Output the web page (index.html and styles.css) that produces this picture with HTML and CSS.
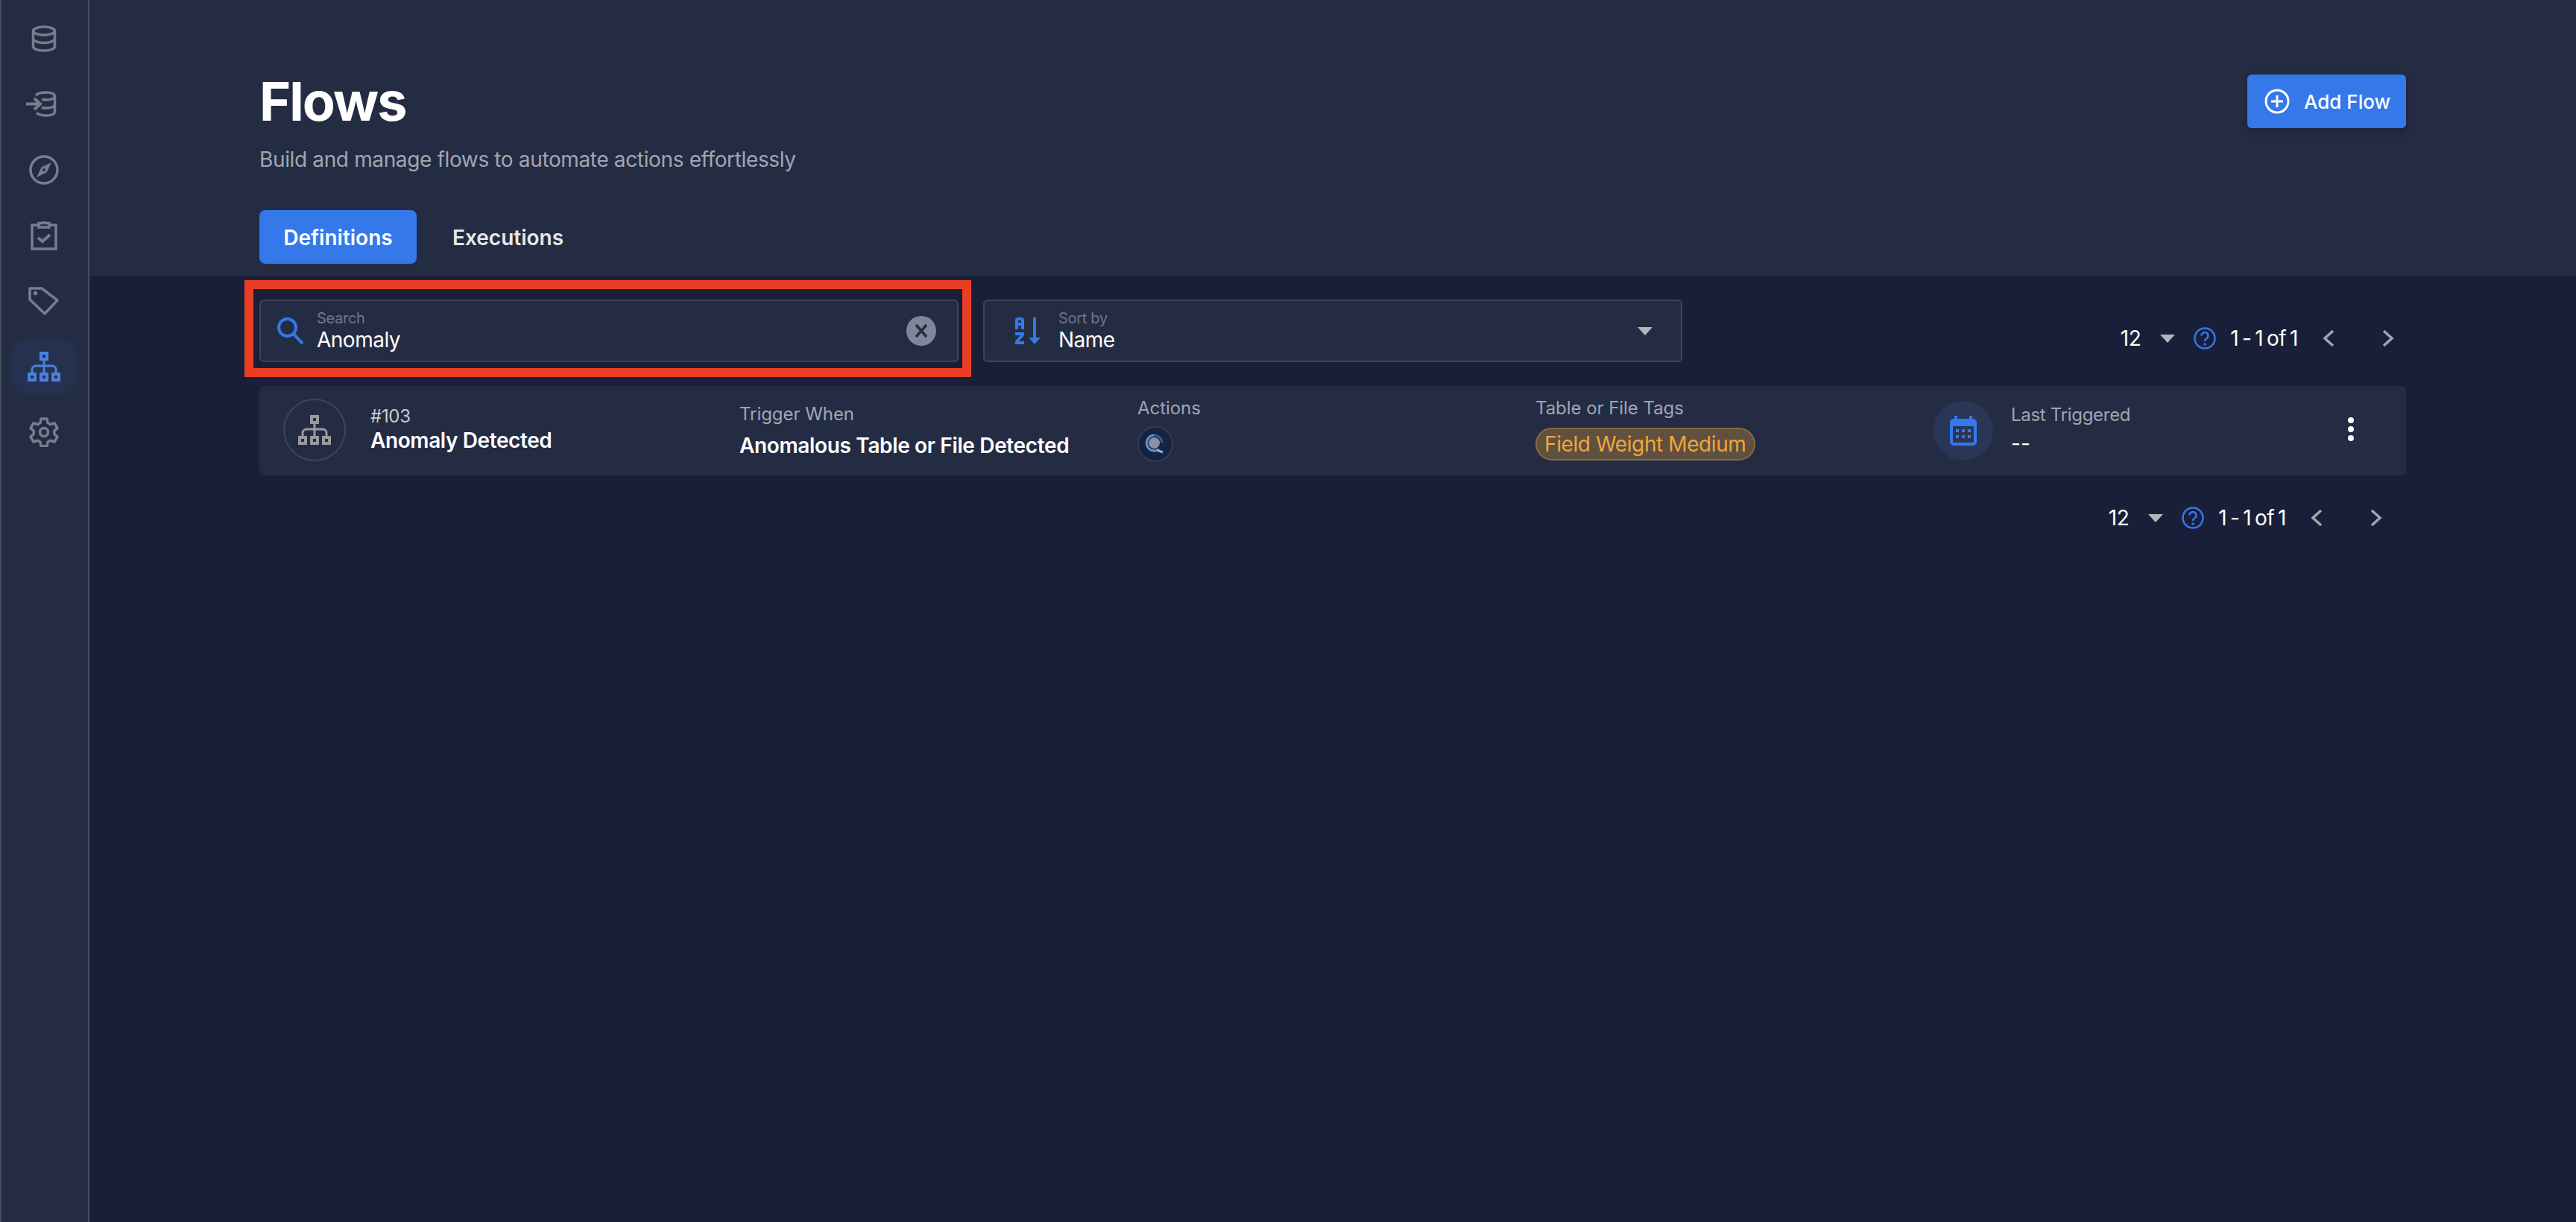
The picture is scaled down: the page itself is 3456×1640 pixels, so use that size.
FILE: index.html
```html
<!DOCTYPE html>
<html lang="en">
<head>
  <meta charset="UTF-8">
  <title>Flows</title>
  <link rel="stylesheet" href="styles.css">
</head>
<body>

  <aside class="sidebar">
    <a class="nav-item">
      <svg width="34" height="36" viewBox="0 0 34 36" fill="none" stroke="currentColor" stroke-width="3.500"><ellipse cx="17" cy="7.500" rx="14.500" ry="5.500"/><path d="M2.500 7.500v21c0 3 6.500 5.500 14.500 5.500s14.500-2.500 14.500-5.500v-21"/><path d="M2.500 18c0 3 6.500 5.500 14.500 5.500s14.500-2.500 14.500-5.500"/></svg>
    </a>
    <a class="nav-item">
      <svg width="48" height="36" viewBox="0 0 48 36" fill="none" stroke="currentColor" stroke-width="3.500"><path d="M13 6c2-2.500 8-4 15-4 6.500 0 10.500 2.200 10.500 5v21c0 2.800-4 5-10.500 5-6 0-11-1-14-3.500"/><path d="M38.500 18c0 2.800-4 5-10.500 5-3 0-5-.3-7-.8M38.500 7c0 2.800-4 5-10.500 5-3 0-5-.3-7-.8"/><path d="M0 17.500h19M11 10l8 7.500-8 7.500" stroke-width="4"/></svg>
    </a>
    <a class="nav-item">
      <svg width="40" height="40" viewBox="0 0 40 40" fill="none"><circle cx="20" cy="20" r="18" stroke="currentColor" stroke-width="3.500"/><path d="M30 10l-6.500 13.500L10 30l6.500-13.500z" fill="currentColor"/><circle cx="20" cy="20" r="2" fill="#242c44"/></svg>
    </a>
    <a class="nav-item">
      <svg width="36" height="40" viewBox="0 0 36 40" fill="none" stroke="currentColor" stroke-width="3.500"><path d="M11 6H2v32h32V6h-9"/><path d="M11 3.500h5a2.500 2.500 0 0 1 4 0h5V9H11z"/><path d="M10 23l6 5 10-9" stroke-width="4"/></svg>
    </a>
    <a class="nav-item">
      <svg width="42" height="40" viewBox="0 0 42 40" fill="none"><path d="M2 3h16l21 16-17 18L2 18z" stroke="currentColor" stroke-width="3.500" stroke-linejoin="round"/><circle cx="9.500" cy="9.500" r="2.800" fill="currentColor"/></svg>
    </a>
    <a class="nav-item active">
      <svg width="44" height="40" viewBox="0 0 44 40"><use href="#tree"/></svg>
    </a>
    <a class="nav-item">
      <svg width="40" height="40" viewBox="0 0 40 40" fill="none" stroke="currentColor" stroke-width="3.500" stroke-linejoin="round"><path d="M16 2h8l1 5.500 3.800 2.200 5.200-2 4 7-4.200 3.500v4.400l4.200 3.500-4 7-5.200-2-3.800 2.200-1 5.500h-8l-1-5.500-3.800-2.200-5.200 2-4-7 4.200-3.500v-4.400L2 14.700l4-7 5.200 2L15 7.500z"/><circle cx="20" cy="20" r="5.500"/></svg>
    </a>
  </aside>

  <main class="main">
    <header class="page-head">
      <div class="title-row">
        <div>
          <h1>Flows</h1>
          <p class="subtitle">Build and manage flows to automate actions effortlessly</p>
        </div>
        <button class="add-btn">
          <svg width="34" height="34" viewBox="0 0 34 34" fill="none" stroke="#fff" stroke-width="3"><circle cx="17" cy="17" r="15"/><path d="M17 9v16M9 17h16"/></svg>
          Add Flow
        </button>
      </div>
      <div class="tabs">
        <span class="tab active">Definitions</span>
        <span class="tab">Executions</span>
      </div>
    </header>

    <section class="content">
      <div class="toolbar">
        <div class="field search">
          <svg class="field-icon" width="36" height="36" viewBox="0 0 36 36" fill="none" stroke="#3478ea" stroke-width="4"><circle cx="13.500" cy="13.500" r="11.500"/><path d="M21.500 22L34 35"/></svg>
          <div class="field-text">
            <span class="field-label">Search</span>
            <span class="field-value">Anomaly</span>
          </div>
          <span class="clear">
            <svg width="20" height="20" viewBox="0 0 20 20" stroke="#242c44" stroke-width="3.500"><path d="M3 2l14 16M17 2L3 18"/></svg>
          </span>
        </div>
        <div class="field sort">
          <svg class="field-icon" width="34" height="36" viewBox="0 0 34 36" fill="#3478ea"><path d="M24 0h4v28h-4z"/><path d="M18 27h16l-8 9z"/><path fill-rule="evenodd" d="M0 16V4a4 4 0 0 1 4-4h4a4 4 0 0 1 4 4v12H8v-5H4v5zM4 7h4V4H4zM0 20h12v4l-7 8h7v4H0v-4l7-8H0z"/></svg>
          <div class="field-text">
            <span class="field-label">Sort by</span>
            <span class="field-value">Name</span>
          </div>
          <span class="caret"></span>
        </div>
        <div class="pager">
          <span class="pager-size">12</span>
          <span class="caret"></span>
          <svg class="help" width="30" height="30" viewBox="0 0 30 30" fill="none"><circle cx="15" cy="15" r="13.500" stroke="#3478ea" stroke-width="2.500"/><path d="M10.500 11.500a4.500 4.500 0 1 1 7 3.700c-1.600 1.100-2.500 2-2.500 3.800" stroke="#3478ea" stroke-width="2.500"/><circle cx="15" cy="23" r="1.700" fill="#3478ea"/></svg>
          <span class="pager-range">1 - 1 of 1</span>
          <svg class="chev" width="16" height="24" viewBox="0 0 16 24" fill="none" stroke="#a2a5b0" stroke-width="3.500"><path d="M14 2L3 12l11 10"/></svg>
          <svg class="chev" width="16" height="24" viewBox="0 0 16 24" fill="none" stroke="#a2a5b0" stroke-width="3.500"><path d="M2 2l11 10L2 22"/></svg>
        </div>
      </div>

      <div class="flow-row">
        <div class="col col-name">
          <span class="flow-avatar">
            <svg width="44" height="40" viewBox="0 0 44 40"><use href="#tree"/></svg>
          </span>
          <div class="name-text">
            <div class="flow-id">#103</div>
            <div class="flow-name">Anomaly Detected</div>
          </div>
        </div>
        <div class="col col-trigger">
          <div class="row-label">Trigger When</div>
          <div class="row-strong">Anomalous Table or File Detected</div>
        </div>
        <div class="col col-actions">
          <div class="row-label">Actions</div>
          <span class="action-icon">
            <svg width="32" height="32" viewBox="0 0 32 32" fill="none"><circle cx="14.500" cy="14.500" r="7.500" fill="#8a93a6"/><path d="M21 23A10.500 10.500 0 1 1 14.500 4" stroke="#5d97cc" stroke-width="3"/><path d="M14.500 4A10.500 10.500 0 0 1 25 14.500" stroke="#2f5f96" stroke-width="3"/><path d="M18 24l8 3" stroke="#7fb2dc" stroke-width="3"/></svg>
          </span>
        </div>
        <div class="col col-tags">
          <div class="row-label">Table or File Tags</div>
          <span class="tag">Field Weight Medium</span>
        </div>
        <div class="col col-last">
          <span class="cal-circle">
            <svg width="36" height="40" viewBox="0 0 36 40"><path d="M6 0h4v4h16V0h4v4h1a5 5 0 0 1 5 5v26a5 5 0 0 1-5 5H5a5 5 0 0 1-5-5V9a5 5 0 0 1 5-5h1z" fill="#3478ea"/><path d="M4 14h28v20a2 2 0 0 1-2 2H6a2 2 0 0 1-2-2z" fill="#293656"/><path d="M8 18h4v4H8zM16 18h4v4h-4zM24 18h4v4h-4zM8 26h4v4H8zM16 26h4v4h-4zM24 26h4v4h-4z" fill="#3478ea"/></svg>
          </span>
          <div>
            <div class="row-label">Last Triggered</div>
            <div class="last-value">--</div>
          </div>
        </div>
        <span class="kebab"><i></i><i></i><i></i></span>
      </div>

      <div class="pager pager-bottom">
        <span class="pager-size">12</span>
        <span class="caret"></span>
        <svg class="help" width="30" height="30" viewBox="0 0 30 30" fill="none"><circle cx="15" cy="15" r="13.500" stroke="#3478ea" stroke-width="2.500"/><path d="M10.500 11.500a4.500 4.500 0 1 1 7 3.700c-1.600 1.100-2.500 2-2.500 3.800" stroke="#3478ea" stroke-width="2.500"/><circle cx="15" cy="23" r="1.700" fill="#3478ea"/></svg>
        <span class="pager-range">1 - 1 of 1</span>
        <svg class="chev" width="16" height="24" viewBox="0 0 16 24" fill="none" stroke="#a2a5b0" stroke-width="3.500"><path d="M14 2L3 12l11 10"/></svg>
        <svg class="chev" width="16" height="24" viewBox="0 0 16 24" fill="none" stroke="#a2a5b0" stroke-width="3.500"><path d="M2 2l11 10L2 22"/></svg>
      </div>

      <!-- red marker drawn over the search box -->
      <div class="highlight"></div>
    </section>
  </main>

  <svg width="0" height="0" class="defs">
    <defs>
      <g id="tree">
        <path fill="currentColor" fill-rule="evenodd" d="M16 0h12v12H16zM20 4v4h4V4zM0 28h12v12H0zM4 32v4h4v-4zM16 28h12v12H16zM20 32v4h4v-4zM32 28h12v12H32zM36 32v4h4v-4z"/>
        <path fill="none" stroke="currentColor" stroke-width="3" d="M22 12v16M6 28v-4a5 5 0 0 1 5-5h22a5 5 0 0 1 5 5v4"/>
      </g>
    </defs>
  </svg>

</body>
</html>
```

FILE: styles.css
```css
* {
  box-sizing: border-box;
}
html, body {
  margin: 0;
  height: 100%;
}
body {
  font-family: "Inter", "Noto Sans", sans-serif;
  background: #191f38;
  color: #fff;
  display: flex;
  min-height: 1640px;
}
.defs {
  position: absolute;
}

/* left nav */
.sidebar {
  width: 120px;
  flex: none;
  background: #242c44;
  border-left: 2px solid #474e63;
  border-right: 2px solid #474e63;
  padding: 8px 0 0 14px;
  display: flex;
  flex-direction: column;
}
.nav-item {
  width: 86px;
  height: 88px;
  flex: none;
  display: flex;
  align-items: center;
  justify-content: center;
  color: #777c8e;
}
.nav-item.active {
  height: 72px;
  margin: 8px 0;
  border-radius: 20px;
  background: #24324f;
  color: #4d7fe0;
}

/* header */
.main {
  flex: 1;
  display: flex;
  flex-direction: column;
}
.page-head {
  height: 370px;
  background: #242c44;
  padding: 92px 228px 0;
}
.title-row {
  display: flex;
  justify-content: space-between;
  align-items: flex-start;
  height: 190px;
}
h1 {
  margin: 0;
  font-size: 72px;
  line-height: 88px;
  font-weight: 700;
  letter-spacing: -2px;
}
.subtitle {
  margin: 15px 0 0;
  font-size: 28px;
  line-height: 38px;
  color: #a2a5b0;
  letter-spacing: -0.36px;
}
.add-btn {
  margin-top: 8px;
  width: 213px;
  height: 72px;
  background: #3478ea;
  border: 0;
  border-radius: 6px;
  box-shadow: 0 4px 10px rgba(0,0,0,0.25);
  color: #fff;
  font-family: inherit;
  font-size: 26px;
  font-weight: 500;
  display: flex;
  align-items: center;
  gap: 19px;
  padding: 0 0 0 23px;
}
.tabs {
  display: flex;
  gap: 48px;
}
.tab {
  height: 72px;
  display: flex;
  align-items: center;
  font-size: 28px;
  font-weight: 600;
  color: #e6e7eb;
  padding-top: 1px;
}
.tab.active {
  width: 211px;
  justify-content: center;
  background: #3478ea;
  border-radius: 8px;
  color: #fff;
}

/* body */
.content {
  position: relative;
  padding: 32px 228px 0;
}
.toolbar {
  display: flex;
  align-items: center;
  gap: 33px;
  height: 84px;
}
.field {
  height: 84px;
  flex: none;
  display: flex;
  align-items: center;
  background: #242c44;
  border: 2px solid #3e4558;
  border-radius: 6px;
}
.search {
  width: 938px;
  padding: 0 28px 0 22px;
}
.sort {
  width: 938px;
  padding: 0 38px 0 41px;
}
.field-icon {
  flex: none;
}
.field-text {
  flex: 1;
  margin-left: 17px;
  display: flex;
  flex-direction: column;
}
.sort .field-text {
  margin-left: 24px;
}
.field-label {
  font-size: 20px;
  line-height: 24px;
  color: #71768a;
  letter-spacing: -0.3px;
}
.field-value {
  font-size: 28px;
  line-height: 34px;
  letter-spacing: -0.5px;
}
.clear {
  width: 40px;
  height: 40px;
  border-radius: 50%;
  background: #80869a;
  display: flex;
  align-items: center;
  justify-content: center;
}
.caret {
  width: 0;
  height: 0;
  border-left: 10px solid transparent;
  border-right: 10px solid transparent;
  border-top: 11px solid #b4b6be;
}

/* pagination */
.pager {
  margin-left: auto;
  display: flex;
  align-items: center;
  font-size: 28px;
  letter-spacing: -0.5px;
  word-spacing: -2.5px;
}
.toolbar .pager {
  margin-top: 20px;
  padding-right: 16px;
}
.pager-size {
  margin-right: 26px;
}
.pager .help {
  margin: 0 19px 0 25px;
}
.pager-range {
  margin-right: 33px;
  white-space: nowrap;
}
.pager .chev + .chev {
  margin-left: 64px;
}
.pager-bottom {
  justify-content: flex-end;
  margin-top: 40px;
  padding-right: 32px;
  height: 34px;
}

/* flow row */
.flow-row {
  margin-top: 32px;
  height: 120px;
  background: #242c44;
  border-radius: 6px;
  padding-left: 32px;
  display: flex;
  position: relative;
  align-items: center;
}
.col {
  flex: none;
  height: 100%;
}
.col-name {
  width: 612px;
  display: flex;
  align-items: center;
  gap: 33px;
  padding-bottom: 2px;
}
.name-text {
  margin-top: -2px;
}
.flow-avatar {
  width: 84px;
  height: 84px;
  flex: none;
  border: 2px solid #3e4558;
  border-radius: 50%;
  display: flex;
  align-items: center;
  justify-content: center;
  color: #9a9a9e;
}
.flow-id {
  font-size: 24px;
  line-height: 30px;
  color: #c9cad0;
  letter-spacing: -0.3px;
}
.flow-name {
  font-size: 28px;
  line-height: 34px;
  font-weight: 600;
  letter-spacing: -0.4px;
}
.col-trigger {
  width: 534px;
  padding-top: 22px;
}
.row-label {
  font-size: 24px;
  line-height: 32px;
  color: #a2a5b0;
  letter-spacing: -0.05px;
}
.row-strong {
  margin-top: 8px;
  font-size: 28px;
  line-height: 36px;
  font-weight: 600;
  letter-spacing: -0.35px;
}
.col-actions {
  width: 534px;
  padding-top: 14px;
}
.action-icon {
  margin-top: 8px;
  width: 48px;
  height: 48px;
  border: 2px solid #333b52;
  border-radius: 50%;
  background: #192140;
  display: flex;
  align-items: center;
  justify-content: center;
}
.col-tags {
  width: 534px;
  padding-top: 14px;
}
.tag {
  display: inline-block;
  margin-top: 10px;
  height: 44px;
  line-height: 40px;
  padding: 0 10px;
  border: 2px solid #8a6a3e;
  border-radius: 22px;
  background: #5f5040;
  color: #f0a63a;
  font-size: 28px;
  letter-spacing: -0.4px;
  white-space: nowrap;
}
.col-last {
  display: flex;
  align-items: center;
  gap: 24px;
}
.cal-circle {
  width: 80px;
  height: 80px;
  border-radius: 50%;
  background: #293656;
  display: flex;
  align-items: center;
  justify-content: center;
}
.col-last .row-label {
  margin-top: -5px;
  letter-spacing: -0.3px;
}
.last-value {
  margin-top: 7px;
  font-size: 28px;
  line-height: 30px;
}
.kebab {
  position: absolute;
  right: 70px;
  top: 42px;
  display: flex;
  flex-direction: column;
  gap: 4px;
}
.kebab i {
  width: 8px;
  height: 8px;
  border-radius: 50%;
  background: #fff;
}

/* annotation */
.highlight {
  position: absolute;
  left: 208px;
  top: 6px;
  width: 975px;
  height: 130px;
  border: 12px solid #ea3e24;
}
```
